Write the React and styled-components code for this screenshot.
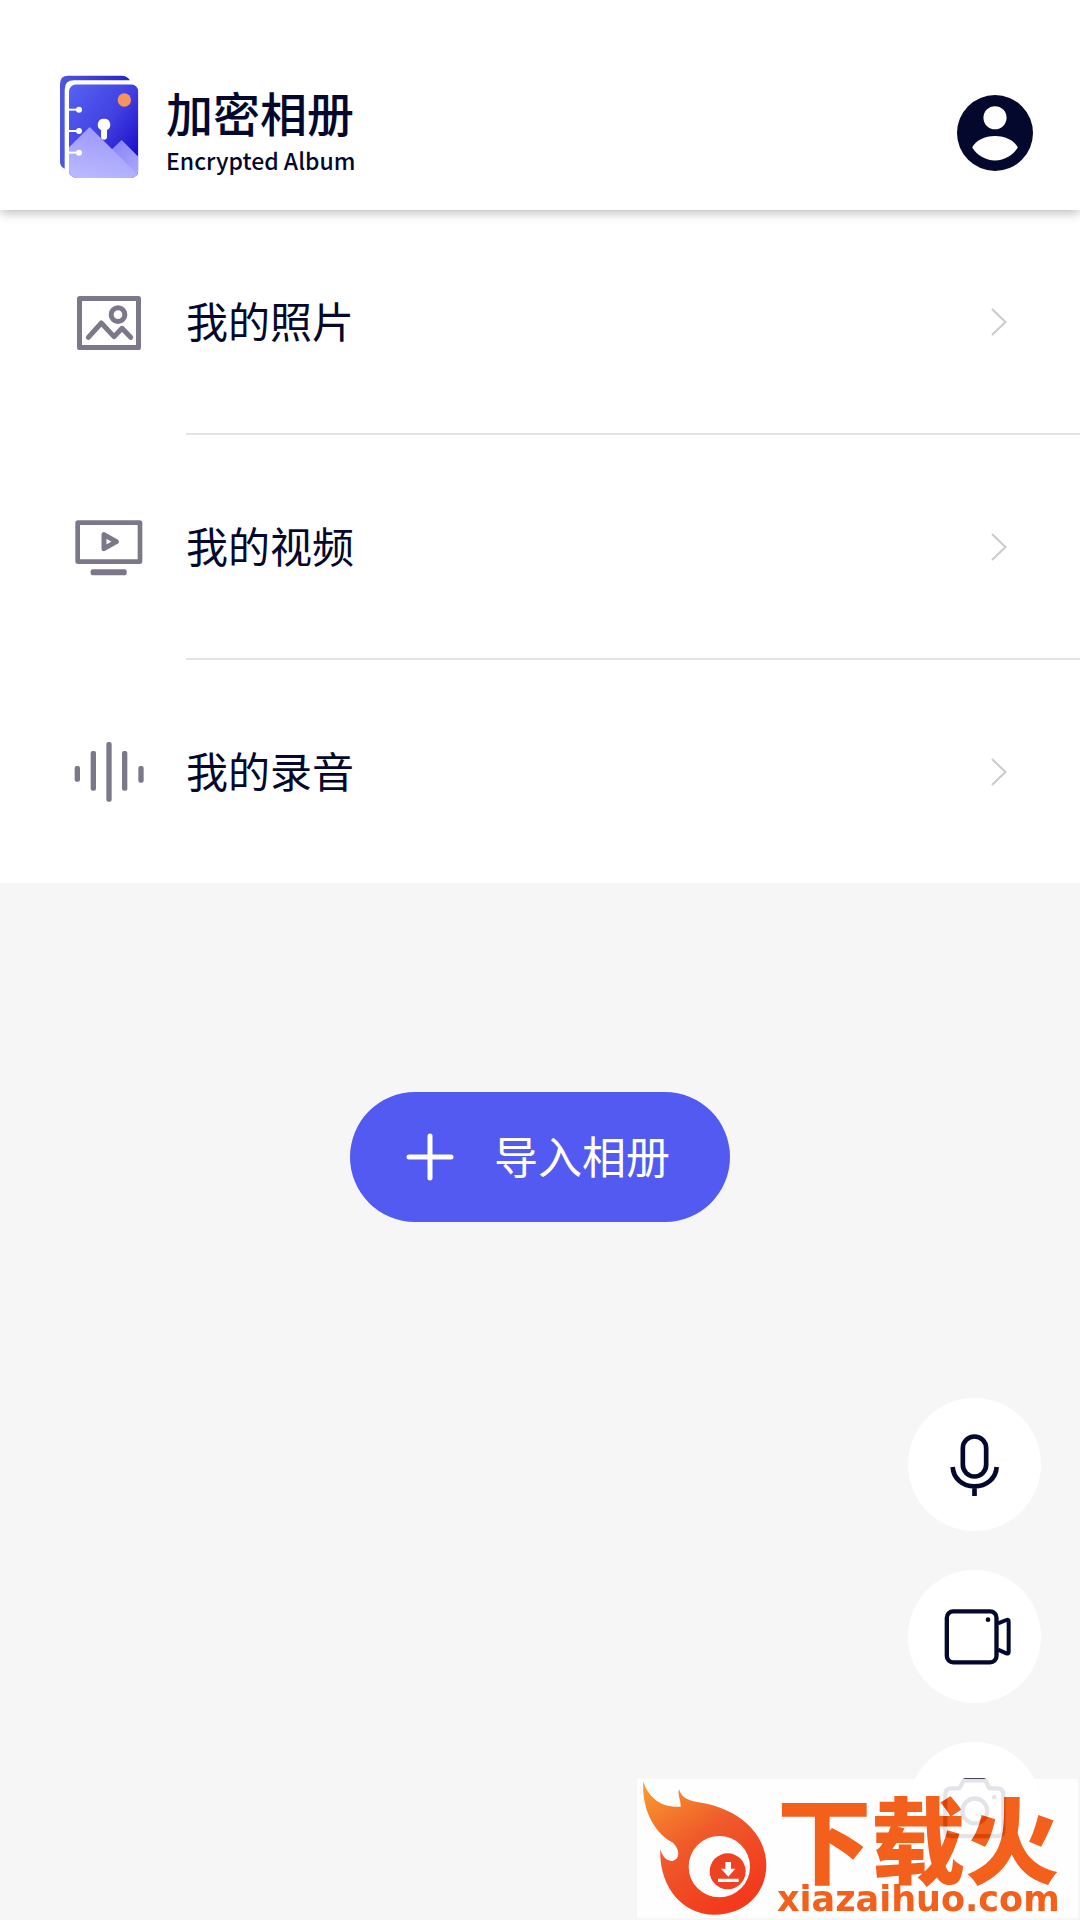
import React from "react";
import styled, { createGlobalStyle } from "styled-components";

const ink = "#05082d";
const muted = "#7d7889";

const GlobalStyle = createGlobalStyle`
  *, *::before, *::after { box-sizing: border-box; }
  body {
    margin: 0;
    background: #f6f6f6;
    color: ${ink};
    font-family: "Noto Sans CJK SC", "Noto Sans", sans-serif;
  }
  svg { display: block; flex: none; }
`;

const Page = styled.div`
  min-height: 100vh;
  display: flex;
  flex-direction: column;
`;

const Header = styled.header`
  position: relative;
  z-index: 1;
  display: flex;
  align-items: flex-end;
  justify-content: space-between;
  height: 210px;
  padding: 0 39px 31px 60px;
  background: #fff;
  box-shadow: 0 3px 10px rgba(0, 0, 0, 0.26);
`;

const Brand = styled.div`
  display: flex;
  align-items: flex-end;
  gap: 27px;
`;

const BrandText = styled.div`
  display: flex;
  flex-direction: column;
  gap: 6px;
  padding-bottom: 3px;
`;

const Title = styled.h1`
  margin: 0;
  font-size: 47px;
  line-height: 52px;
  font-weight: 500;
`;

const Subtitle = styled.p`
  margin: 0;
  font-size: 23px;
  line-height: 32px;
  font-weight: 500;
`;

const AccountButton = styled.button`
  display: grid;
  place-items: center;
  padding: 8px;
  border: 0;
  background: none;
  color: ${ink};
  cursor: pointer;
`;

const Menu = styled.ul`
  margin: 0;
  padding: 0;
  list-style: none;
  background: #fff;
`;

const MenuLink = styled.a`
  display: flex;
  align-items: center;
  gap: 42px;
  padding-left: 74px;
  color: inherit;
  text-decoration: none;
`;

const IconSlot = styled.span`
  display: flex;
  justify-content: center;
  width: 70px;
  color: ${muted};
`;

const MenuBody = styled.span`
  flex: 1;
  display: flex;
  align-items: center;
  justify-content: space-between;
  box-sizing: content-box;
  height: 223px;
  padding-right: 73px;
  border-bottom: ${(p) => (p.$divided ? "2px solid #e4e4e6" : "0")};
`;

const Label = styled.span`
  padding-bottom: 4px;
  font-size: ${(p) => p.$size}px;
  line-height: 60px;
`;

const ImportButton = styled.button`
  align-self: center;
  display: flex;
  align-items: center;
  gap: 40px;
  height: 130px;
  margin-top: 209px;
  padding: 0 60px 0 56px;
  border: 0;
  border-radius: 65px;
  background: #525af2;
  color: #fff;
  font-family: inherit;
  cursor: pointer;
`;

const Actions = styled.div`
  align-self: flex-end;
  display: flex;
  flex-direction: column;
  gap: 39px;
  margin-top: 176px;
  padding: 0 39px 44px 0;
`;

const RoundButton = styled.button`
  display: grid;
  place-items: center;
  width: 133px;
  height: 133px;
  padding: 0;
  border: 0;
  border-radius: 50%;
  background: #fff;
  color: ${ink};
  cursor: pointer;
`;

const SiteBadge = styled.div`
  position: fixed;
  right: 2px;
  bottom: 2px;
  z-index: 2;
  display: flex;
  align-items: center;
  gap: 10px;
  width: 441px;
  height: 139px;
  padding-left: 5px;
  background: #fff;
  opacity: 0.89;
  color: #f34e00;
`;

const BadgeText = styled.div`
  display: flex;
  flex-direction: column;
  align-items: center;
  padding-top: 6px;
`;

const BadgeName = styled.strong`
  font-size: 94px;
  line-height: 94px;
  font-weight: 900;
`;

const BadgeDomain = styled.span`
  font-family: "DejaVu Sans", sans-serif;
  font-size: 35px;
  line-height: 32px;
  font-weight: 700;
`;

const AlbumLogo = () => (
  <svg width="79" height="104" viewBox="60 46 237 312" aria-hidden="true">
    <defs>
      <linearGradient id="cover" x1="0" y1="0" x2="1" y2="1">
        <stop offset="0" stopColor="#5863f3" />
        <stop offset="0.5" stopColor="#403fe0" />
        <stop offset="0.85" stopColor="#1c0fcc" />
      </linearGradient>
      <linearGradient id="back" x1="0" y1="0" x2="1" y2="0">
        <stop offset="0" stopColor="#4f58dc" />
        <stop offset="1" stopColor="#2a1fcb" />
      </linearGradient>
      <linearGradient id="peak" x1="0.6" y1="0" x2="0.3" y2="1">
        <stop offset="0" stopColor="#9a96fb" />
        <stop offset="1" stopColor="#b9b8ff" />
      </linearGradient>
      <linearGradient id="peakFar" x1="0" y1="0" x2="1" y2="1">
        <stop offset="0" stopColor="#857ff6" />
        <stop offset="1" stopColor="#aca8ff" />
      </linearGradient>
      <clipPath id="page"><rect x="87" y="74" width="208" height="281" rx="22" /></clipPath>
    </defs>
    <path d="M60 72Q60 48 84 48H245Q262 48 270 62H102Q74 62 74 90V327Q60 321 60 306Z" fill="url(#back)" />
    <g clipPath="url(#page)">
      <rect x="87" y="74" width="208" height="281" fill="url(#cover)" />
      <circle cx="253" cy="121" r="20" fill="#f5945f" />
      <path d="M192 177a18 18 0 0 1 9 34V231a9 9 0 0 1-18 0V211a18 18 0 0 1 9-34Z" fill="#fff" />
      <path d="M200 284L245 241L295 291V355H200Z" fill="url(#peakFar)" />
      <path d="M87 263L149 202L295 346V355H87Z" fill="url(#peak)" />
    </g>
    {[150, 214, 279].map((y) => (
      <g key={y} fill="#fff">
        <rect x="84" y={y - 3} width="34" height="6" />
        <circle cx="117" cy={y} r="9" />
      </g>
    ))}
  </svg>
);

const AccountIcon = () => (
  <svg width="76" height="76" viewBox="108 74 230 230" aria-hidden="true">
    <circle cx="223" cy="189" r="115" fill="currentColor" />
    <circle cx="223" cy="143" r="35" fill="#fff" />
    <path d="M154 233C164 212 192 198 223 198S282 212 292 233C278 256 252 272 223 272S168 256 154 233Z" fill="#fff" />
  </svg>
);

const PhotoIcon = () => (
  <svg width="64" height="54" viewBox="81 75 192 162" fill="none" stroke="currentColor" aria-hidden="true">
    <rect x="88.500" y="82.500" width="177" height="147" rx="1" strokeWidth="15" />
    <circle cx="204" cy="131" r="20.500" strokeWidth="15" />
    <path d="M115 199L154 156L192 197L216 172L242 199" strokeWidth="15" strokeLinecap="round" strokeLinejoin="round" />
  </svg>
);

const VideoIcon = () => (
  <svg width="68" height="56" viewBox="75 84 204 168" fill="none" stroke="currentColor" aria-hidden="true">
    <rect x="83" y="92" width="187" height="117" rx="1" strokeWidth="14" />
    <path d="M162 128V170L199 149Z" strokeWidth="15" strokeLinejoin="round" />
    <rect x="122" y="232" width="108" height="18" rx="6" fill="currentColor" stroke="none" />
  </svg>
);

const waveBars = [
  [81, 162, 209],
  [129, 117, 236],
  [176, 90, 269],
  [223, 117, 236],
  [272, 162, 212],
];

const AudioIcon = () => (
  <svg width="70" height="60" viewBox="71 90 210 180" fill="currentColor" aria-hidden="true">
    {waveBars.map(([x, top, bottom]) => (
      <rect key={x} x={x - 8} y={top} width="16" height={bottom - top} rx="6" />
    ))}
  </svg>
);

const Chevron = () => (
  <svg width="16" height="28" viewBox="0 0 16 28" fill="none" stroke="#cbcbcb" strokeWidth="2" aria-hidden="true">
    <path d="M1 1L14.500 14L1 27" />
  </svg>
);

const PlusIcon = () => (
  <svg width="48" height="48" viewBox="0 0 48 48" stroke="currentColor" strokeWidth="5" strokeLinecap="round" aria-hidden="true">
    <path d="M24 3V45M3 24H45" />
  </svg>
);

const MicIcon = () => (
  <svg width="49" height="62" viewBox="180 161 147 186" fill="none" stroke="currentColor" strokeWidth="14" aria-hidden="true">
    <rect x="218.500" y="168.500" width="70" height="120" rx="35" />
    <path d="M188 260C190 294 218 318 253.500 318S318 294 320 260M253.500 318V347" />
  </svg>
);

const CamcorderIcon = () => (
  <svg width="75" height="56" viewBox="142 176 225 168" fill="none" stroke="currentColor" strokeWidth="13" aria-hidden="true">
    <rect x="171.500" y="183" width="149" height="153" rx="19" />
    <circle cx="295" cy="208" r="7" fill="currentColor" stroke="none" />
    <path d="M325 219L350 209Q357 206 357 214V304Q357 312 350 309L325 298" strokeWidth="12" />
  </svg>
);

const CameraIcon = () => (
  <svg width="63" height="62" viewBox="938 141 192 186" fill="none" stroke="currentColor" strokeWidth="13" aria-hidden="true">
    <path d="M964 171H984Q989 171 991 166L998 152Q1000 147 1006 147H1062Q1068 147 1070 152L1077 166Q1079 171 1084 171H1103Q1122 171 1122 190V298Q1122 317 1103 317H964Q945 317 945 298V190Q945 171 964 171Z" />
    <circle cx="1035" cy="240" r="38" />
    <circle cx="1094" cy="198" r="7" fill="currentColor" stroke="none" />
  </svg>
);

const FlameLogo = () => (
  <svg width="125" height="135" viewBox="36 33 375 405" aria-hidden="true">
    <defs>
      <linearGradient id="flame" x1="0" y1="0" x2="0.6" y2="1">
        <stop offset="0" stopColor="#fb9416" />
        <stop offset="0.5" stopColor="#ef4712" />
        <stop offset="1" stopColor="#f22302" />
      </linearGradient>
    </defs>
    <path
      d="M40 35C54 80 92 114 152 110C153 92 142 76 147 58C154 84 178 94 214 98C322 116 409 188 409 284C409 370 345 434 252 434C158 434 86 350 91 238C98 262 112 276 130 272C150 266 150 238 129 218C78 194 34 122 40 35Z"
      fill="url(#flame)"
    />
    <circle cx="268" cy="290" r="92" fill="#fff" />
    <circle cx="293" cy="304" r="54" fill="#ec2d08" />
    <path d="M286 276H303V296H316L295 320L273 296H286ZM264 326H326V336H264Z" fill="#fff" />
  </svg>
);

const menuItems = [
  { label: "我的照片", href: "#photos", Icon: PhotoIcon },
  { label: "我的视频", href: "#videos", Icon: VideoIcon },
  { label: "我的录音", href: "#recordings", Icon: AudioIcon },
];

const actions = [
  { label: "录音", Icon: MicIcon },
  { label: "录像", Icon: CamcorderIcon },
  { label: "拍照", Icon: CameraIcon },
];

export default function App() {
  return (
    <>
      <GlobalStyle />
      <Page>
        <Header>
          <Brand>
            <AlbumLogo />
            <BrandText>
              <Title>加密相册</Title>
              <Subtitle>Encrypted Album</Subtitle>
            </BrandText>
          </Brand>
          <AccountButton type="button" aria-label="账户">
            <AccountIcon />
          </AccountButton>
        </Header>
        <nav>
          <Menu>
            {menuItems.map(({ label, href, Icon }, i) => (
              <li key={href}>
                <MenuLink href={href}>
                  <IconSlot><Icon /></IconSlot>
                  <MenuBody $divided={i < menuItems.length - 1}>
                    <Label $size={42}>{label}</Label>
                    <Chevron />
                  </MenuBody>
                </MenuLink>
              </li>
            ))}
          </Menu>
        </nav>
        <ImportButton type="button">
          <PlusIcon />
          <Label $size={44}>导入相册</Label>
        </ImportButton>
        <Actions>
          {actions.map(({ label, Icon }) => (
            <RoundButton key={label} type="button" aria-label={label}>
              <Icon />
            </RoundButton>
          ))}
        </Actions>
      </Page>
      <SiteBadge>
        <FlameLogo />
        <BadgeText>
          <BadgeName>下载火</BadgeName>
          <BadgeDomain>xiazaihuo.com</BadgeDomain>
        </BadgeText>
      </SiteBadge>
    </>
  );
}
